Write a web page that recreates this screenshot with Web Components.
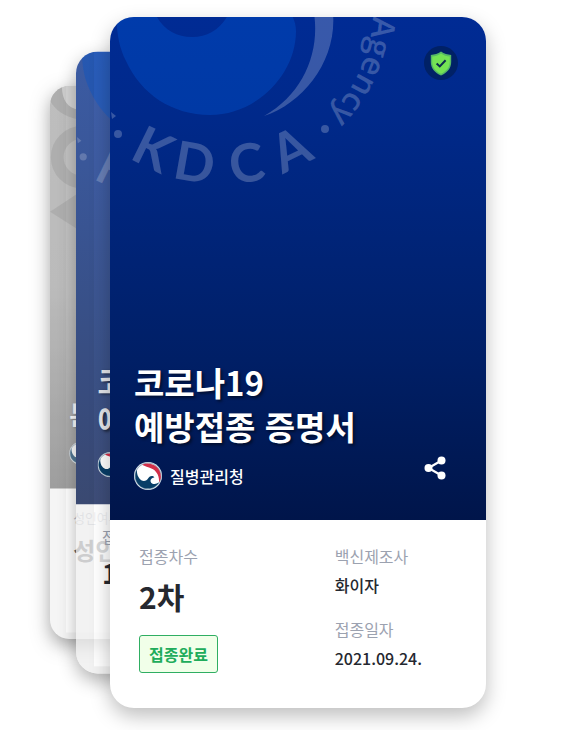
<!DOCTYPE html>
<html lang="ko">
<head>
<meta charset="utf-8">
<meta name="viewport" content="width=device-width, initial-scale=1">
<title>예방접종 증명서</title>
<style>
    body {
        margin: 0;
        background: #fff;
        font-family: "Noto Sans CJK KR", "Noto Sans", sans-serif;
    }
</style>
</head>
<body>

<card-stack>
    <certificate-card depth="2" inert>
        <seal-watermark slot="watermark" variant="mark"></seal-watermark>
        <span slot="title">본인확인</span>
        <agency-mark slot="agency">질병관리청</agency-mark>
        <info-field slot="main" size="large" label="성인여부">성인</info-field>
    </certificate-card>

    <certificate-card depth="1" inert>
        <seal-watermark slot="watermark"></seal-watermark>
        <span slot="title">코로나19<br>예방접종 증명서</span>
        <agency-mark slot="agency">질병관리청</agency-mark>
        <info-field slot="main" size="large" label="접종차수">1차</info-field>
    </certificate-card>

    <certificate-card>
        <seal-watermark slot="watermark"></seal-watermark>
        <shield-badge slot="badge"></shield-badge>
        <span slot="title">코로나19<br>예방접종 증명서</span>
        <agency-mark slot="agency">질병관리청</agency-mark>
        <share-button slot="action"></share-button>
        <info-field slot="main" size="large" label="접종차수">2차</info-field>
        <status-tag slot="main">접종완료</status-tag>
        <info-field slot="side" label="백신제조사">화이자</info-field>
        <info-field slot="side" label="접종일자">2021.09.24.</info-field>
    </certificate-card>
</card-stack>

<script>
class BaseElement extends HTMLElement {
    constructor() {
        super();
        this.attachShadow({ mode: 'open' });
    }

    connectedCallback() {
        if (this.shadowRoot.childNodes.length) return;
        this.shadowRoot.innerHTML = this.render();
    }
}

class CardStack extends BaseElement {
    render() {
        return `
            <style>
                :host {
                    display: grid;
                    padding: 17px 94px 23px 110px;
                    overflow: hidden;
                }
                /* every card shares one cell, the depth moves it out to the left */
                ::slotted(*) {
                    grid-area: 1 / 1;
                }
            </style>
            <slot></slot>
        `;
    }
}

class CertificateCard extends BaseElement {
    render() {
        return `
            <style>
                :host {
                    display: flex;
                    flex-direction: column;
                    position: relative;
                    overflow: hidden;
                    border-radius: 24px;
                    background: #fff;
                    box-shadow: 0 8px 20px rgba(0, 0, 0, 0.26);
                    transform-origin: left center;
                }
                :host([depth="1"]) {
                    transform: translateX(-34px) scale(0.9);
                    background: rgba(255, 255, 255, 0.75);
                    box-shadow: 0 8px 20px rgba(0, 0, 0, 0.3);
                }
                :host([depth="2"]) {
                    transform: translateX(-60px) scale(0.8);
                    opacity: 0.7;
                    box-shadow: 0 8px 22px rgba(0, 0, 0, 0.5);
                }
                /* shade over the exposed edge of the cards behind */
                :host([depth])::after {
                    content: "";
                    position: absolute;
                    inset: 0;
                    border-left: 20px solid rgba(0, 0, 0, 0.05);
                    border-bottom: 8px solid rgba(0, 0, 0, 0.05);
                }
                header {
                    position: relative;
                    display: flex;
                    flex-direction: column;
                    justify-content: space-between;
                    box-sizing: border-box;
                    aspect-ratio: 376 / 503;
                    padding: 29px 28px 30px 24px;
                    color: #fff;
                    background: linear-gradient(#002b94, #00298a 20%, #001f66 68%, #00154a);
                }
                :host([depth="1"]) header {
                    color: #e3e5ea;
                    background: linear-gradient(#3f60ac, #3e5ca2 25%, #3b5288 70%, #3e4d78);
                }
                :host([depth="2"]) header {
                    background: linear-gradient(#acacac, #a8a8a8 50%, #7c7c7c);
                }
                .badge {
                    display: flex;
                    justify-content: flex-end;
                }
                .bottom {
                    display: flex;
                    justify-content: space-between;
                    align-items: flex-end;
                    position: relative;
                }
                .issuer {
                    display: flex;
                    flex-direction: column;
                    gap: 14px;
                }
                h2 {
                    margin: 0;
                    font-size: 33px;
                    font-weight: 700;
                    line-height: 44px;
                    white-space: nowrap;
                    text-shadow: 2px 2px 3px rgba(0, 0, 0, 0.5);
                }
                .body {
                    display: grid;
                    grid-template-columns: 8fr 5fr;
                    flex: 1;
                    padding: 24px 29px 35px;
                }
                .main {
                    display: flex;
                    flex-direction: column;
                    align-items: flex-start;
                    gap: 19px;
                }
                .side {
                    display: flex;
                    flex-direction: column;
                    gap: 20px;
                }
            </style>
            <header>
                <slot name="watermark"></slot>
                <div class="badge"><slot name="badge"></slot></div>
                <div class="bottom">
                    <div class="issuer">
                        <h2><slot name="title"></slot></h2>
                        <slot name="agency"></slot>
                    </div>
                    <slot name="action"></slot>
                </div>
            </header>
            <div class="body">
                <div class="main"><slot name="main"></slot></div>
                <div class="side"><slot name="side"></slot></div>
            </div>
        `;
    }
}

class SealWatermark extends BaseElement {
    render() {
        return `
            <style>
                :host {
                    position: absolute;
                    inset: 0;
                }
                svg {
                    display: block;
                    width: 100%;
                    height: 100%;
                }
                text {
                    fill: #fff;
                    fill-opacity: 0.22;
                }
                .initials {
                    font-family: Lato, sans-serif;
                    font-size: 53px;
                    font-weight: 700;
                    text-anchor: middle;
                }
                .ring {
                    font-family: "Open Sans", sans-serif;
                    font-size: 32px;
                    font-weight: 600;
                }
            </style>
            ${this.getAttribute('variant') === 'mark' ? this.mark() : this.seal()}
        `;
    }

    seal() {
        // letters of the lower arc, with their angle from the bottom of the ring
        const initials = [['K', 26], ['D', 10], ['C', -9], ['A', -26]]
            .map(([letter, angle]) =>
                `<text class="initials" x="112" y="167" transform="rotate(${angle} 112 -9)">${letter}</text>`)
            .join('');

        return `
            <svg viewBox="0 0 376 503" aria-hidden="true">
                <defs>
                    <path id="arc" d="M263 -9 A151 151 0 0 1 112 142"/>
                </defs>
                <path fill="#0058d8" fill-opacity="0.35" fill-rule="evenodd" d="M6 -4 C7 18 9 30 16 44 C31 77 62 98 100 98 C146 98 186 58 186 14 C186 4 181 -4 177 -10 Z M45 -4 C52 12 66 20 82 20 C98 20 111 12 119 -4 Z"/>
                <path fill="#fff" fill-opacity="0.22" d="M204 -4 C210 36 193 77 154 99 C194 86 227 43 223 -4 Z"/>
                <g fill="#fff" fill-opacity="0.22">
                    <circle cx="8" cy="117" r="4"/>
                    <circle cx="215" cy="112" r="4"/>
                    <path d="M1 95 L6 99 L2 102 Z"/>
                </g>
                ${initials}
                <text class="ring"><textPath href="#arc" startOffset="8">Agency</textPath></text>
            </svg>
        `;
    }

    mark() {
        return `
            <svg viewBox="0 0 376 503" aria-hidden="true">
                <path fill="#959595" d="M0 0 H15 C15 18 22 27 36 30 V42 C18 38 6 30 0 18 Z"/>
                <path fill="#c4c4c4" d="M15 0 H120 V30 H36 C22 27 15 18 15 0 Z"/>
                <circle cx="40" cy="89" r="31" fill="none" stroke="#959595" stroke-width="16"/>
                <path fill="#959595" d="M0 157 L38 132 V181 Z"/>
            </svg>
        `;
    }
}

class ShieldBadge extends BaseElement {
    render() {
        return `
            <style>
                :host {
                    display: block;
                    position: relative;
                }
                svg {
                    display: block;
                }
            </style>
            <svg width="34" height="34" viewBox="0 0 34 34" role="img" aria-label="인증됨">
                <circle cx="17" cy="17" r="17" fill="#002166"/>
                <path d="M17 5.6 C20 7.8 23.6 8.8 27.2 9 V16 C27.2 22.5 22.8 27 17 29.4 C11.2 27 6.8 22.5 6.8 16 V9 C10.4 8.8 14 7.8 17 5.6 Z" fill="#55b866"/>
                <path d="M17 7.4 C19.8 9.3 22.8 10.3 25.8 10.5 V16 C25.8 21.6 22 25.7 17 27.8 C12 25.7 8.2 21.6 8.2 16 V10.5 C11.2 10.3 14.2 9.3 17 7.4 Z" fill="#74e354"/>
                <path d="M12.6 17.4 L15.8 20.4 L21.6 14.2" fill="none" stroke="#0b2b4e" stroke-width="2"/>
            </svg>
        `;
    }
}

class AgencyMark extends BaseElement {
    render() {
        return `
            <style>
                :host {
                    display: flex;
                    align-items: center;
                    gap: 8px;
                    font-size: 16px;
                    font-weight: 500;
                    line-height: 24px;
                }
                svg {
                    flex: none;
                }
            </style>
            <svg width="28" height="28" viewBox="0 0 28 28" aria-hidden="true">
                <circle cx="14" cy="14" r="14" fill="#dfe8ee"/>
                <circle cx="14" cy="14" r="13" fill="#fff" stroke="#3a6a8c" stroke-width="0.5"/>
                <path fill="#d22f49" d="M8 2.8 C16 -0.8 27 4 26.9 15 C26.6 17.6 25.8 19.4 25 20.6 C25.6 13.6 22.4 8.4 17.4 6.4 C14.2 5.2 11 4.4 8 2.8 Z"/>
                <path fill="#083e67" d="M3 7.4 C-0.2 13 1 20.6 6.6 24.4 C13 28.4 21.6 26.8 24.8 20.6 C21.8 22.8 17.4 22.4 16.6 19.4 C16 17.2 18.2 15.6 20.4 15.4 C19 13.2 15.8 13.6 14.4 16 C12.6 19.4 8.4 20 5.8 17 C3.4 14.2 2.6 10.8 3 7.4 Z"/>
            </svg>
            <slot></slot>
        `;
    }
}

class ShareButton extends BaseElement {
    render() {
        return `
            <style>
                :host {
                    display: block;
                    margin: 0 8px 4px 0;
                }
                button {
                    display: block;
                    padding: 4px 3px;
                    border: 0;
                    background: none;
                    color: inherit;
                    cursor: pointer;
                }
                svg {
                    display: block;
                }
            </style>
            <button type="button" aria-label="공유">
                <svg width="24" height="28" viewBox="0 0 24 28" fill="currentColor">
                    <path d="M18.5 6.5 L5.5 14 L18.5 21.5" fill="none" stroke="currentColor" stroke-width="2.2"/>
                    <circle cx="18.5" cy="6.5" r="4"/>
                    <circle cx="5.5" cy="14" r="4"/>
                    <circle cx="18.5" cy="21.5" r="4"/>
                </svg>
            </button>
        `;
    }
}

class InfoField extends BaseElement {
    render() {
        return `
            <style>
                :host {
                    display: block;
                    color: #25282f;
                    font-size: 16px;
                    line-height: 24px;
                    white-space: nowrap;
                }
                dl, dd {
                    margin: 0;
                }
                dt {
                    margin-bottom: 5px;
                    color: #9ca2b0;
                    font-weight: 400;
                }
                dd {
                    font-weight: 500;
                }
                :host([size="large"]) dt {
                    margin-bottom: 8px;
                }
                :host([size="large"]) dd {
                    font-size: 30px;
                    font-weight: 700;
                    line-height: 40px;
                }
            </style>
            <dl>
                <dt>${this.getAttribute('label')}</dt>
                <dd><slot></slot></dd>
            </dl>
        `;
    }
}

class StatusTag extends BaseElement {
    render() {
        return `
            <style>
                :host {
                    display: block;
                    padding: 6px 9px;
                    border: 1px solid #2fae62;
                    border-radius: 3px;
                    background: #f1ffe9;
                    color: #20ac5b;
                    font-size: 16px;
                    font-weight: 700;
                    line-height: 24px;
                    white-space: nowrap;
                }
            </style>
            <slot></slot>
        `;
    }
}

customElements.define('card-stack', CardStack);
customElements.define('certificate-card', CertificateCard);
customElements.define('seal-watermark', SealWatermark);
customElements.define('shield-badge', ShieldBadge);
customElements.define('agency-mark', AgencyMark);
customElements.define('share-button', ShareButton);
customElements.define('info-field', InfoField);
customElements.define('status-tag', StatusTag);
</script>
</body>
</html>
